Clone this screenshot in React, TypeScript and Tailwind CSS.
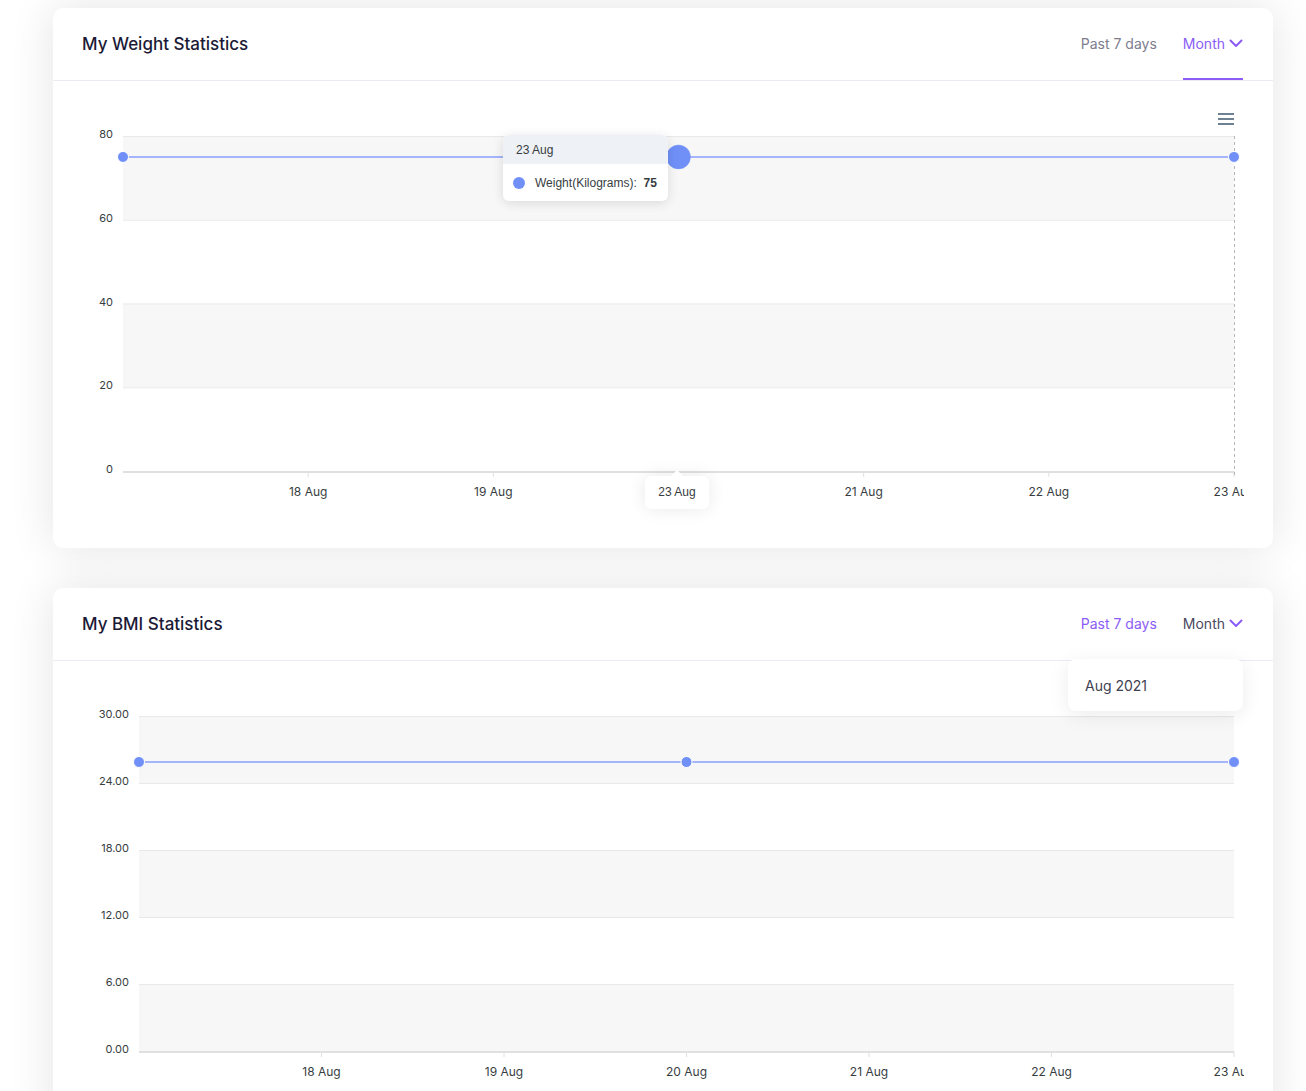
import React from "react";

type ChartProps = {
  plotLeft: number;
  yLabels: string[];
  yMax: number;
  value: number;
  pointIdx: number[];
  xLabels: string[];
  hoverIdx?: number;
  crosshair?: boolean;
  yLabelRight: number;
};

const PLOT_RIGHT = 1181;
const PLOT_TOP = 55;
const PLOT_BOTTOM = 390;

function LineChart({
  plotLeft,
  yLabels,
  yMax,
  value,
  pointIdx,
  xLabels,
  hoverIdx,
  crosshair,
  yLabelRight,
}: ChartProps) {
  const bands = yLabels.length - 1;
  const bandH = (PLOT_BOTTOM - PLOT_TOP) / bands;
  const step = (PLOT_RIGHT - plotLeft) / 6;
  const lineY = PLOT_TOP + ((yMax - value) / yMax) * (PLOT_BOTTOM - PLOT_TOP);

  return (
    <svg width={1191} height={467} className="block overflow-hidden">
      {/* bands */}
      {Array.from({ length: bands }).map((_, i) =>
        i % 2 === 0 ? (
          <rect
            key={i}
            x={plotLeft}
            y={PLOT_TOP + i * bandH}
            width={PLOT_RIGHT - plotLeft}
            height={bandH}
            fill="#f7f7f7"
          />
        ) : null
      )}
      {/* grid lines */}
      {yLabels.map((_, i) => (
        <line
          key={i}
          x1={plotLeft}
          x2={PLOT_RIGHT}
          y1={PLOT_TOP + i * bandH + 0.5}
          y2={PLOT_TOP + i * bandH + 0.5}
          stroke="#e9e9e9"
          strokeWidth={1}
        />
      ))}
      {/* y labels */}
      {yLabels.map((l, i) => (
        <text
          key={l}
          x={yLabelRight}
          y={PLOT_TOP + i * bandH + 2}
          textAnchor="end"
          fontSize={11}
          fill="#373d3f"
          fontFamily="Inter, sans-serif"
        >
          {l}
        </text>
      ))}
      {/* x axis */}
      <line x1={plotLeft} x2={PLOT_RIGHT} y1={PLOT_BOTTOM + 1} y2={PLOT_BOTTOM + 1} stroke="#e0e0e0" strokeWidth={2} />
      {xLabels.map((l, i) => {
        const x = plotLeft + (i + 1) * step;
        return (
          <g key={i}>
            <line x1={x} x2={x} y1={PLOT_BOTTOM} y2={PLOT_BOTTOM + 6} stroke="#e0e0e0" strokeWidth={1} />
            {l && (
              <text
                x={x}
                y={PLOT_BOTTOM + 25}
                textAnchor="middle"
                fontSize={12}
                fill="#373d3f"
                fontFamily="Inter, sans-serif"
              >
                {l}
              </text>
            )}
          </g>
        );
      })}
      {crosshair && (
        <line
          x1={PLOT_RIGHT + 0.5}
          x2={PLOT_RIGHT + 0.5}
          y1={PLOT_TOP}
          y2={PLOT_BOTTOM + 6}
          stroke="#b6b6b6"
          strokeDasharray="3 3"
          strokeWidth={1}
        />
      )}
      {/* series */}
      <line x1={plotLeft} x2={PLOT_RIGHT} y1={lineY} y2={lineY} stroke="#a4b5fb" strokeWidth={2} />
      {pointIdx.map((idx) => {
        const x = plotLeft + idx * step;
        const big = idx === hoverIdx;
        return (
          <circle
            key={idx}
            cx={x}
            cy={lineY}
            r={big ? 12 : 5.5}
            fill="#7090f8"
            stroke={big ? "rgba(112,144,248,0.35)" : "#ffffff"}
            strokeWidth={1}
          />
        );
      })}
    </svg>
  );
}

function ChevronDown() {
  return (
    <svg width="14" height="9" viewBox="0 0 14 9" fill="none">
      <polyline points="1.5,1.5 7,7 12.5,1.5" stroke="#8b5cf6" strokeWidth="2" strokeLinecap="round" strokeLinejoin="round" />
    </svg>
  );
}

function CardHeader({ title, active }: { title: string; active: "week" | "month" }) {
  return (
    <div className="flex h-[73px] items-center justify-between border-b border-[#ebebf3] pl-[29px] pr-[30px]">
      <h2 className="pt-[1px] text-[17px] font-medium text-[#1b1a36]">{title}</h2>
      <div className="flex h-full items-stretch gap-[26px] text-[14px]">
        <button className={`flex items-center pb-[2px] ${active === "week" ? "text-[#8b5cf6]" : "text-[#7d7d8e]"}`}>
          Past 7 days
        </button>
        <button
          className={`flex items-center gap-[4px] border-b-2 ${
            active === "month" ? "border-[#8b5cf6] text-[#8b5cf6]" : "border-transparent text-[#4a4a5e]"
          }`}
        >
          <span>Month</span>
          <ChevronDown />
        </button>
      </div>
    </div>
  );
}

export default function App() {
  return (
    <div className="min-h-screen bg-white pt-[8px] pb-10" style={{ fontFamily: "Inter, 'Noto Sans', sans-serif" }}>
      {/* Weight card */}
      <div className="relative ml-[53px] h-[540px] w-[1220px] rounded-[10px] bg-white shadow-[0_0_45px_rgba(0,0,0,0.11)]">
        <CardHeader title="My Weight Statistics" active="month" />
        <LineChart
          plotLeft={70}
          yLabels={["80", "60", "40", "20", "0"]}
          yMax={80}
          value={75}
          pointIdx={[0, 3, 6]}
          hoverIdx={3}
          crosshair
          xLabels={["18 Aug", "19 Aug", "", "21 Aug", "22 Aug", "23 Aug"]}
          yLabelRight={60}
        />
        {/* chart menu */}
        <div className="absolute left-[1165px] top-[105px] flex w-[16px] flex-col gap-[3px]">
          <span className="h-[2px] w-full bg-[#6e8192]" />
          <span className="h-[2px] w-full bg-[#6e8192]" />
          <span className="h-[2px] w-full bg-[#6e8192]" />
        </div>
        {/* point tooltip */}
        <div
          className="absolute left-[450px] top-[127px] w-[165px] overflow-hidden rounded-[6px] bg-white text-[12px] text-[#373d3f] shadow-[0_2px_12px_rgba(0,0,0,0.12)]"
          style={{ fontFamily: "'Liberation Sans', Arial, sans-serif" }}
        >
          <div className="flex h-[29px] items-center bg-[#eef1f5] px-[13px]">23 Aug</div>
          <div className="flex h-[37px] items-center gap-[10px] px-[10px]">
            <span className="h-[12px] w-[12px] rounded-full bg-[#7090f8]" />
            <span>
              Weight(Kilograms):&nbsp;&nbsp;<b className="font-bold">75</b>
            </span>
          </div>
        </div>
        {/* x-axis tooltip */}
        <div
          className="absolute left-[592px] top-[468px] flex h-[33px] w-[64px] items-center justify-center rounded-[6px] bg-white pb-[2px] text-[12px] text-[#373d3f] shadow-[0_0_18px_rgba(0,0,0,0.09)]"
          style={{ fontFamily: "'Liberation Sans', Arial, sans-serif" }}
        >
          <span className="absolute -top-[6px] left-1/2 h-0 w-0 -translate-x-1/2 border-x-[6px] border-b-[6px] border-x-transparent border-b-white" />
          23 Aug
        </div>
      </div>

      {/* BMI card */}
      <div className="relative ml-[53px] mt-[40px] h-[540px] w-[1220px] rounded-[10px] bg-white shadow-[0_0_45px_rgba(0,0,0,0.11)]">
        <CardHeader title="My BMI Statistics" active="week" />
        <LineChart
          plotLeft={86}
          yLabels={["30.00", "24.00", "18.00", "12.00", "6.00", "0.00"]}
          yMax={30}
          value={25.88}
          pointIdx={[0, 3, 6]}
          xLabels={["18 Aug", "19 Aug", "20 Aug", "21 Aug", "22 Aug", "23 Aug"]}
          yLabelRight={76}
        />
        {/* month dropdown */}
        <div className="absolute left-[1015px] top-[71px] flex h-[52px] w-[175px] items-center rounded-[8px] bg-white px-[17px] text-[14px] text-[#3f3f52] shadow-[0_4px_20px_rgba(0,0,0,0.08)]">
          Aug 2021
        </div>
      </div>
    </div>
  );
}
